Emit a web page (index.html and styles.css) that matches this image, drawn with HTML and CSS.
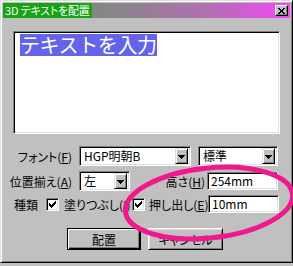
FILE: index.html
```html
<!DOCTYPE html>
<html lang="ja">
<head>
<meta charset="utf-8">
<title>3D テキストを配置</title>
<link rel="stylesheet" href="styles.css">
</head>
<body>
<div class="window">
  <div class="titlebar">
    <span class="title">3D テキストを配置</span>
    <span class="close"><svg width="7" height="6" viewBox="0 0 7 6" shape-rendering="crispEdges"><path fill="#000" d="M0 0h2v1h-2zM5 0h2v1h-2zM1 1h2v1h-2zM4 1h2v1h-2zM2 2h3v2h-3zM1 4h2v1h-2zM4 4h2v1h-2zM0 5h2v1h-2zM5 5h2v1h-2z"/></svg></span>
  </div>
  <div class="content">
    <div class="textarea"><span class="sel">テキストを入力</span></div>

    <div class="row r1">
      <span class="lbl lbl-main">フォント(<u>F</u>)</span>
      <div class="combo c-font"><span class="val">HGP明朝B</span><span class="dd"><svg width="7" height="4" viewBox="0 0 7 4" shape-rendering="crispEdges"><path fill="#000" d="M0 0h7v1h-7zM1 1h5v1h-5zM2 2h3v1h-3zM3 3h1v1h-1z"/></svg></span></div>
      <div class="combo c-style"><span class="val">標準</span><span class="dd"><svg width="7" height="4" viewBox="0 0 7 4" shape-rendering="crispEdges"><path fill="#000" d="M0 0h7v1h-7zM1 1h5v1h-5zM2 2h3v1h-3zM3 3h1v1h-1z"/></svg></span></div>
    </div>

    <div class="row r2">
      <span class="lbl lbl-main">位置揃え(<u>A</u>)</span>
      <div class="combo c-align"><span class="val">左</span><span class="dd"><svg width="7" height="4" viewBox="0 0 7 4" shape-rendering="crispEdges"><path fill="#000" d="M0 0h7v1h-7zM1 1h5v1h-5zM2 2h3v1h-3zM3 3h1v1h-1z"/></svg></span></div>
      <span class="lbl lbl-height">高さ(<u>H</u>)</span>
      <div class="edit"><span class="val">254mm</span></div>
    </div>

    <div class="row r3">
      <span class="lbl lbl-kind">種類</span>
      <span class="check"><svg width="9" height="9" viewBox="0 0 9 9" shape-rendering="crispEdges"><path fill="#000" d="M7 1h1v1h-1zM6 2h2v1h-2zM1 3h1v1h-1zM5 3h3v1h-3zM1 4h2v1h-2zM4 4h3v1h-3zM1 5h5v1h-5zM2 6h3v1h-3zM3 7h1v1h-1z"/></svg></span>
      <span class="lbl lbl-fill">塗りつぶし(<u>I</u>)</span>
      <span class="check check2"><svg width="9" height="9" viewBox="0 0 9 9" shape-rendering="crispEdges"><path fill="#000" d="M7 1h1v1h-1zM6 2h2v1h-2zM1 3h1v1h-1zM5 3h3v1h-3zM1 4h2v1h-2zM4 4h3v1h-3zM1 5h5v1h-5zM2 6h3v1h-3zM3 7h1v1h-1z"/></svg></span>
      <span class="lbl lbl-extrude">押し出し(<u>E</u>)</span>
      <div class="edit"><span class="val">10mm</span></div>
    </div>

    <div class="buttons">
      <span class="btn btn-default">配置</span>
      <span class="btn">キャンセル</span>
    </div>
  </div>
</div>
<svg class="annot" width="293" height="266" viewBox="0 0 293 266">
  <ellipse cx="209" cy="203" rx="84" ry="35" transform="rotate(-6 209 203)" fill="none" stroke="#f0188c" stroke-width="5"/>
</svg>
</body>
</html>
```
FILE: styles.css
```css
html, body {
  margin: 0;
  padding: 0;
  background: #c0c0c0;
}
body {
  position: relative;
  width: 293px;
  height: 266px;
  overflow: hidden;
  font-family: "Noto Sans CJK JP", "Liberation Sans", sans-serif;
  font-size: 12px;
  font-feature-settings: "palt";
  color: #000;
}
u { text-decoration: underline; text-underline-offset: 1px; }

.window {
  box-sizing: border-box;
  width: 293px;
  height: 263px;
  border: 1px solid;
  border-color: #dfdfdf #000 #000 #dfdfdf;
  box-shadow: inset 1px 1px #fff, inset -1px -1px #808080;
  padding: 2px;
  background: #c0c0c0;
}

.titlebar {
  display: flex;
  align-items: center;
  height: 15px;
  background: linear-gradient(to right, #808080 0%, #868686 38%, #b070b0 70%, #f448f4 100%);
}
.title {
  box-sizing: border-box;
  min-width: 89px;
  height: 15px;
  line-height: 15px;
  padding: 0 2px 0 2px;
  background: #14a414;
  color: #fff;
  font-size: 11px;
  letter-spacing: -0.2px;
  white-space: nowrap;
}
.close {
  box-sizing: border-box;
  margin-left: auto;
  margin-right: 2px;
  width: 13px;
  height: 11px;
  display: flex;
  align-items: center;
  justify-content: center;
  background: #c0c0c0;
  border: 1px solid;
  border-color: #fff #000 #000 #fff;
  box-shadow: inset -1px -1px #808080;
}
.close svg { display: block; }

.content {
  display: flex;
  flex-direction: column;
}

.textarea {
  box-sizing: border-box;
  margin: 13px 0 0 10px;
  width: 267px;
  height: 103px;
  background: #fff;
  border: 1px solid;
  border-color: #808080 #fff #fff #808080;
  box-shadow: inset 1px 1px #000, inset -1px -1px #dfdfdf;
  padding: 2px 0 0 6px;
}
.sel {
  display: inline-block;
  height: 22px;
  line-height: 22px;
  background: #6464ea;
  color: #fff;
  font-size: 20px;
  font-feature-settings: normal;
  letter-spacing: -0.4px;
  white-space: nowrap;
}

.row {
  display: flex;
  align-items: center;
  height: 20px;
}
.r1 { margin-top: 12px; }
.r2 { margin-top: 5px; }
.r3 { margin-top: 3px; }

.lbl { white-space: nowrap; }
.lbl-main {
  width: 69px;
  text-align: right;
  margin-right: 7px;
}
.lbl-height {
  width: 75px;
  text-align: right;
  margin-right: 2px;
}
.lbl-kind { margin-left: 11px; width: 32px; }
.lbl-fill { margin-left: 5px; width: 68px; }
.lbl-extrude { margin-left: 4px; width: 57px; text-align: right; margin-right: 2px; }

.combo, .edit {
  box-sizing: border-box;
  display: flex;
  align-items: center;
  background: #fff;
  border: 1px solid;
  border-color: #808080 #fff #fff #808080;
  box-shadow: inset 1px 1px #000, inset -1px -1px #dfdfdf;
  padding: 2px;
}
.combo { height: 20px; }
.edit { height: 18px; width: 71px; padding-left: 3px; }
.c-font { width: 112px; margin-right: 7px; }
.c-style { width: 80px; }
.c-align { width: 51px; }
.val {
  flex: 1;
  padding-left: 2px;
  line-height: 16px;
  white-space: nowrap;
}
.edit .val { padding-left: 0; line-height: 14px; }
.dd {
  box-sizing: border-box;
  width: 13px;
  height: 16px;
  display: flex;
  align-items: center;
  justify-content: center;
  background: #c0c0c0;
  border: 1px solid;
  border-color: #dfdfdf #000 #000 #dfdfdf;
  box-shadow: inset 1px 1px #fff, inset -1px -1px #808080;
}
.dd svg { display: block; margin-top: 1px; }

.check {
  box-sizing: border-box;
  width: 13px;
  height: 13px;
  background: #fff;
  border: 1px solid;
  border-color: #808080 #fff #fff #808080;
  box-shadow: inset 1px 1px #000, inset -1px -1px #dfdfdf;
  padding: 1px;
  display: flex;
}
.check svg { display: block; }

.buttons {
  display: flex;
  gap: 7px;
  margin-top: 14px;
  padding-left: 64px;
}
.btn {
  box-sizing: border-box;
  width: 75px;
  height: 22px;
  display: flex;
  align-items: center;
  justify-content: center;
  background: #c0c0c0;
  border: 1px solid;
  border-color: #fff #000 #000 #fff;
  box-shadow: inset 1px 1px #dfdfdf, inset -1px -1px #808080;
  white-space: nowrap;
}
.btn-default {
  width: 74px;
  border-color: #000;
  box-shadow: inset 1px 1px #fff, inset -1px -1px #000, inset -2px -2px #808080;
}

.annot {
  position: absolute;
  left: 0;
  top: 0;
  pointer-events: none;
}
```
